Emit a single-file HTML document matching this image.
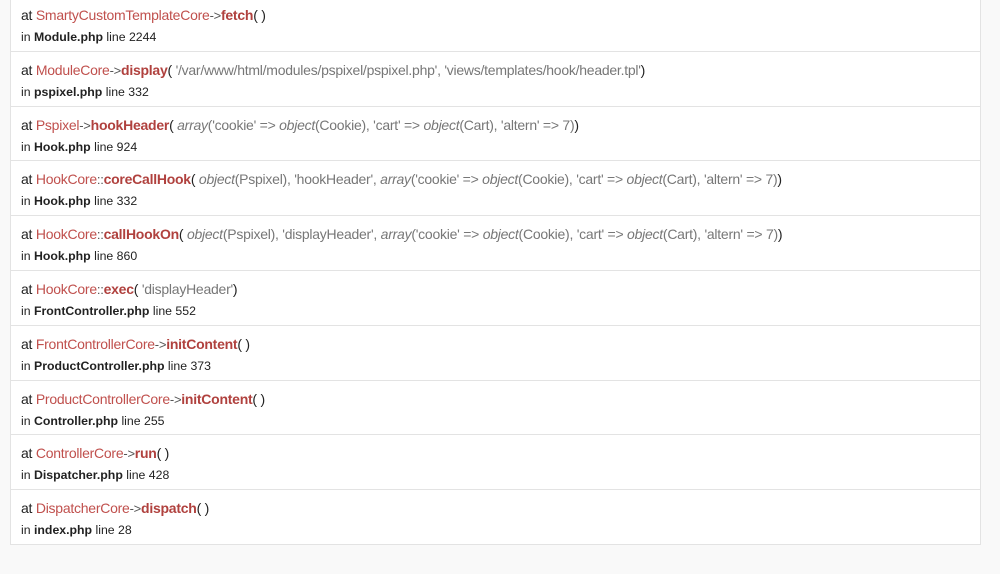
<!DOCTYPE html>
<html><head><meta charset="utf-8"><style>
html,body{margin:0;padding:0;background:#f9f9f9;width:1000px;height:574px;overflow:hidden}
body{font-family:"Liberation Sans",Arial,sans-serif;color:#222}
.box{position:absolute;left:10px;top:-4px;width:969px;background:#fff;border:1px solid #e3e3e3}
.row{height:53.8px;border-bottom:1px solid #e3e3e3;padding:0 10px;box-sizing:content-box}
.row:last-child{border-bottom:none}
.l1{font-size:14px;line-height:20px;padding-top:8px;white-space:nowrap;letter-spacing:-0.25px}
.l2{font-size:12.3px;line-height:20px;margin-top:1px}
.c{color:#c0504d}
.m{color:#b0413e;font-weight:bold}
.a{color:#777}
.a i{color:#777}
.s{color:#555;font-size:13px}
.l2 b{color:#222}
</style></head><body>
<div class="box">
<div class="row"><div class="l1">at <span class="c">SmartyCustomTemplateCore</span><span class="s">-&gt;</span><span class="m">fetch</span>( )</div><div class="l2">in <b>Module.php</b> line 2244</div></div>
<div class="row"><div class="l1">at <span class="c">ModuleCore</span><span class="s">-&gt;</span><span class="m">display</span>( <span class="a">'/var/www/html/modules/pspixel/pspixel.php', 'views/templates/hook/header.tpl'</span>)</div><div class="l2">in <b>pspixel.php</b> line 332</div></div>
<div class="row"><div class="l1">at <span class="c">Pspixel</span><span class="s">-&gt;</span><span class="m">hookHeader</span>( <span class="a"><i>array</i>('cookie' =&gt; <i>object</i>(Cookie), 'cart' =&gt; <i>object</i>(Cart), 'altern' =&gt; 7)</span>)</div><div class="l2">in <b>Hook.php</b> line 924</div></div>
<div class="row"><div class="l1">at <span class="c">HookCore</span><span class="s">::</span><span class="m">coreCallHook</span>( <span class="a"><i>object</i>(Pspixel), 'hookHeader', <i>array</i>('cookie' =&gt; <i>object</i>(Cookie), 'cart' =&gt; <i>object</i>(Cart), 'altern' =&gt; 7)</span>)</div><div class="l2">in <b>Hook.php</b> line 332</div></div>
<div class="row"><div class="l1">at <span class="c">HookCore</span><span class="s">::</span><span class="m">callHookOn</span>( <span class="a"><i>object</i>(Pspixel), 'displayHeader', <i>array</i>('cookie' =&gt; <i>object</i>(Cookie), 'cart' =&gt; <i>object</i>(Cart), 'altern' =&gt; 7)</span>)</div><div class="l2">in <b>Hook.php</b> line 860</div></div>
<div class="row"><div class="l1">at <span class="c">HookCore</span><span class="s">::</span><span class="m">exec</span>( <span class="a">'displayHeader'</span>)</div><div class="l2">in <b>FrontController.php</b> line 552</div></div>
<div class="row"><div class="l1">at <span class="c">FrontControllerCore</span><span class="s">-&gt;</span><span class="m">initContent</span>( )</div><div class="l2">in <b>ProductController.php</b> line 373</div></div>
<div class="row"><div class="l1">at <span class="c">ProductControllerCore</span><span class="s">-&gt;</span><span class="m">initContent</span>( )</div><div class="l2">in <b>Controller.php</b> line 255</div></div>
<div class="row"><div class="l1">at <span class="c">ControllerCore</span><span class="s">-&gt;</span><span class="m">run</span>( )</div><div class="l2">in <b>Dispatcher.php</b> line 428</div></div>
<div class="row"><div class="l1">at <span class="c">DispatcherCore</span><span class="s">-&gt;</span><span class="m">dispatch</span>( )</div><div class="l2">in <b>index.php</b> line 28</div></div>
</div>
</body></html>
